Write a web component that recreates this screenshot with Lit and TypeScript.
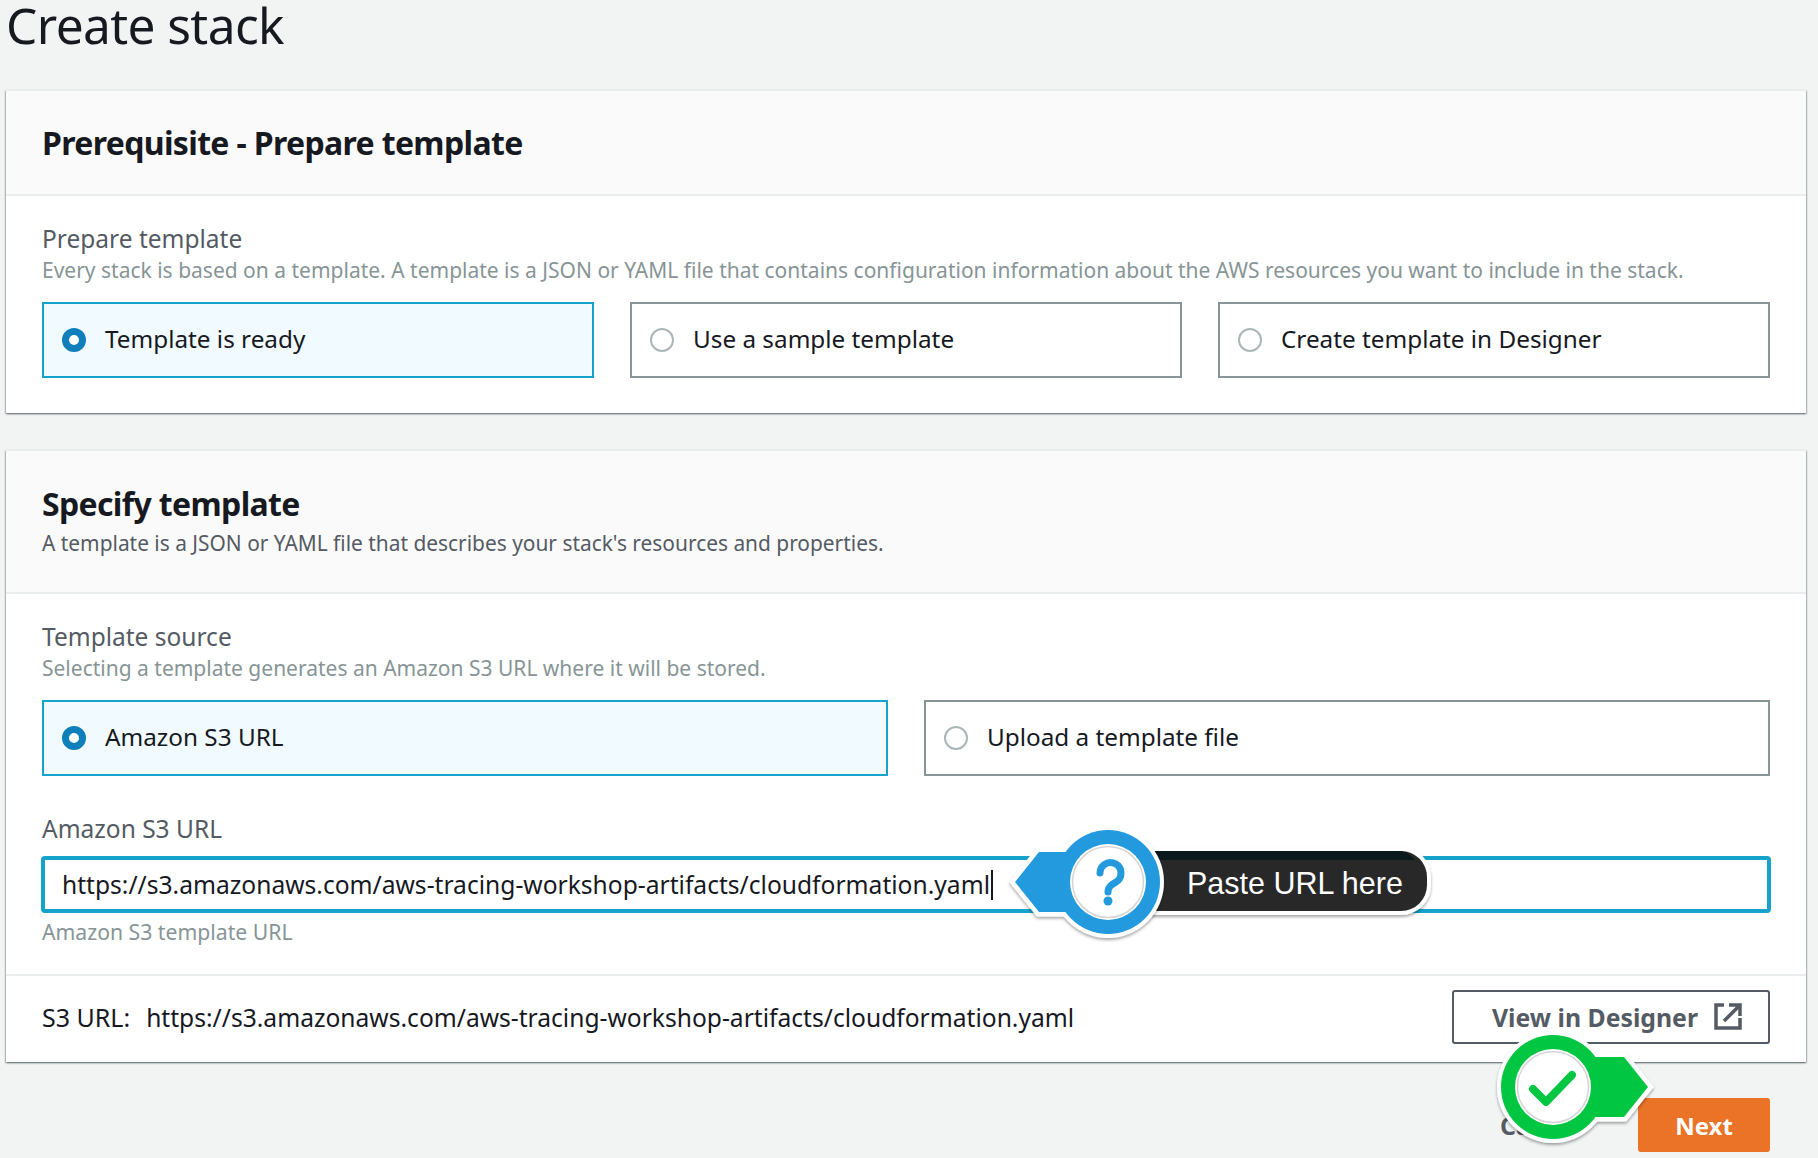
import { LitElement, html, css, svg } from 'lit';
import { customElement } from 'lit/decorators.js';

const S3_URL = 'https://s3.amazonaws.com/aws-tracing-workshop-artifacts/cloudformation.yaml';

@customElement('app-root')
export class AppRoot extends LitElement {
  static styles = css`
    :host {
      display: block;
      position: relative;
      box-sizing: border-box;
      width: 1818px;
      height: 1158px;
      padding: 0 12px 0 6px;
      overflow: hidden;
      background: #f2f3f3;
      color: #16191f;
      font-family: 'Noto Sans', sans-serif;
    }
    h1 {
      margin: 0;
      height: 90px;
      font-size: 49.6px;
      line-height: 50px;
      font-weight: 400;
      letter-spacing: -0.6px;
    }
    .card {
      background: #fff;
      box-shadow: 0 1px 2px 0 rgba(0, 28, 36, 0.45), 1px 1px 1px 0 rgba(0, 28, 36, 0.15),
        -1px 1px 1px 0 rgba(0, 28, 36, 0.15);
      border-top: 1px solid #eaeded;
    }
    .card + .card {
      margin-top: 37px;
    }
    .head {
      box-sizing: border-box;
      display: flex;
      flex-direction: column;
      justify-content: center;
      padding: 0 36px;
      background: #fafafa;
      border-bottom: 2px solid #eaeded;
    }
    .head h2 {
      margin: 0;
      font-size: 32px;
      line-height: 40px;
      font-weight: 700;
      letter-spacing: -0.65px;
    }
    .head p {
      margin: 2px 0 0;
      font-size: 20.9px;
      line-height: 34px;
      color: #545b64;
    }
    .h1 { height: 105px; }
    .h2 { height: 143px; padding-top: 1px; }
    .body {
      padding: 27px 36px 0;
    }
    .first {
      padding-bottom: 35px;
    }
    .label {
      font-size: 24.5px;
      line-height: 32px;
      color: #545b64;
    }
    .desc {
      font-size: 21px;
      line-height: 30px;
      color: #879596;
    }
    .tiles {
      display: grid;
      gap: 36px;
      margin-top: 17px;
    }
    .three { grid-template-columns: repeat(3, 1fr); }
    .two { grid-template-columns: repeat(2, 1fr); }
    .tile {
      box-sizing: border-box;
      display: flex;
      align-items: center;
      gap: 19px;
      height: 76px;
      padding: 0 18px;
      border: 2px solid #879596;
      font-size: 24.3px;
    }
    .tile.on {
      border-color: #16a3cb;
      background: #f1faff;
    }
    .tile-text {
      margin-bottom: 4px;
    }
    .radio {
      box-sizing: border-box;
      width: 24px;
      height: 24px;
      border-radius: 50%;
      border: 2px solid #aab7b8;
      background: #fff;
      flex: none;
    }
    .on .radio {
      border: 7px solid #0f7fbc;
    }
    .url-label {
      margin-top: 37px;
    }
    .input {
      box-sizing: border-box;
      display: flex;
      align-items: center;
      height: 57px;
      margin: 11px -1px 0;
      padding: 0 17px;
      border: 4px solid #16a3cb;
      border-radius: 4px;
      font-size: 24.6px;
      background: #fff;
    }
    .caret {
      width: 2px;
      height: 30px;
      margin-left: 1px;
      background: #16191f;
    }
    .hint {
      margin-top: 4px;
      font-size: 21.2px;
    }
    .foot {
      box-sizing: border-box;
      display: flex;
      align-items: center;
      justify-content: space-between;
      height: 88px;
      margin-top: 27px;
      padding: 0 36px 5px;
      border-top: 2px solid #eaeded;
      font-size: 24.6px;
    }
    .foot span:first-child {
      font-size: 25px;
    }
    .foot span + span {
      margin-left: 16px;
    }
    .btn {
      box-sizing: border-box;
      display: flex;
      align-items: center;
      justify-content: center;
      gap: 16px;
      width: 318px;
      height: 54px;
      padding-left: 12px;
      border: 2px solid #545b64;
      border-radius: 3px;
      color: #545b64;
      font-size: 24.8px;
      font-weight: 700;
    }
    .actions {
      display: flex;
      justify-content: flex-end;
      align-items: center;
      gap: 56px;
      margin-top: 36px;
      padding-right: 36px;
    }
    .cancel {
      color: #545b64;
      font-size: 24.8px;
      font-weight: 700;
    }
    .next {
      display: flex;
      align-items: center;
      justify-content: center;
      width: 132px;
      height: 54px;
      border-radius: 3px;
      background: #ea7328;
      color: #fff;
      font-size: 24px;
      font-weight: 700;
    }
    .overlay {
      position: absolute;
      left: 0;
      top: 0;
      pointer-events: none;
    }
    .tip {
      position: absolute;
      left: 1150px;
      top: 851px;
      box-sizing: border-box;
      width: 277px;
      height: 60px;
      padding-left: 37px;
      color: #fff;
      font: 30.5px/64px 'Liberation Sans', sans-serif;
    }
  `;

  tile(label: string, on = false) {
    return html`<div class="tile ${on ? 'on' : ''}">
      <span class="radio"></span><span class="tile-text">${label}</span>
    </div>`;
  }

  // marker = circle plus arrow head, the outline is drawn first in white
  marker(cx: number, cy: number, dir: number, tip: number, color: string, glyph: unknown) {
    const arrow = `M${cx} ${cy - 30}H${cx + dir * (tip - 24)}L${cx + dir * tip} ${cy}L${cx + dir * (tip - 24)} ${cy + 30}H${cx}Z`;
    return svg`
      <g filter="url(#sh)">
        <path d=${arrow} fill="#fff" stroke="#fff" stroke-width="9" />
        <circle cx=${cx} cy=${cy} r="56" fill="#fff" />
      </g>
      <path d=${arrow} fill=${color} />
      <circle cx=${cx} cy=${cy} r="52" fill=${color} />
      <circle cx=${cx} cy=${cy} r="38" fill="#fff" />
      <circle cx=${cx} cy=${cy} r="35.5" fill="none" stroke="#d5d5d5" stroke-width="1.5" />
      ${glyph}
    `;
  }

  render() {
    return html`
      <h1>Create stack</h1>
      <section class="card">
        <div class="head h1"><h2>Prerequisite - Prepare template</h2></div>
        <div class="body first">
          <div class="label">Prepare template</div>
          <div class="desc">
            Every stack is based on a template. A template is a JSON or YAML file that contains configuration information about the AWS resources you want to include in the stack.
          </div>
          <div class="tiles three">
            ${this.tile('Template is ready', true)} ${this.tile('Use a sample template')}
            ${this.tile('Create template in Designer')}
          </div>
        </div>
      </section>
      <section class="card">
        <div class="head h2">
          <h2>Specify template</h2>
          <p>A template is a JSON or YAML file that describes your stack's resources and properties.</p>
        </div>
        <div class="body">
          <div class="label">Template source</div>
          <div class="desc">Selecting a template generates an Amazon S3 URL where it will be stored.</div>
          <div class="tiles two">
            ${this.tile('Amazon S3 URL', true)} ${this.tile('Upload a template file')}
          </div>
          <div class="label url-label">Amazon S3 URL</div>
          <div class="input">${S3_URL}<span class="caret"></span></div>
          <div class="desc hint">Amazon S3 template URL</div>
        </div>
        <div class="foot">
          <div><span>S3 URL:</span><span>${S3_URL}</span></div>
          <div class="btn">
            View in Designer
            <svg width="28" height="27" viewBox="0 0 28 27" fill="none" stroke="#545b64" stroke-width="3.5">
              <path d="M10 2H2v23h24v-10" />
              <path d="M15 2h11v11M26 2 10 18" />
            </svg>
          </div>
        </div>
      </section>
      <div class="actions">
        <div class="cancel">Cancel</div>
        <div class="next">Next</div>
      </div>

      <svg class="overlay" width="1818" height="1158" viewBox="0 0 1818 1158">
        <defs>
          <filter id="sh" x="-20%" y="-20%" width="140%" height="140%">
            <feDropShadow dx="0" dy="2" stdDeviation="1.5" flood-color="#000" flood-opacity="0.35" />
          </filter>
        </defs>
        <g filter="url(#sh)">
          <rect x="1110" y="847" width="321" height="68" rx="30" fill="#fff" />
        </g>
        <rect x="1110" y="851" width="317" height="60" rx="26" fill="#282828" />
        <path d="M1110 860v-9h291a26 26 0 0 1 14 9Z" fill="#0a1a1c" />
        ${this.marker(
          1108,
          882,
          -1,
          93,
          '#239ade',
          svg`<path d="M1100 873a10.5 10.5 0 1 1 16 9c-5 3-8 5-8 10" fill="none" stroke="#239ade" stroke-width="7" stroke-linecap="round" /><circle cx="1108" cy="901" r="4.5" fill="#239ade" />`,
        )}
        ${this.marker(
          1553,
          1087,
          1,
          95,
          '#00c642',
          svg`<path d="M1533 1089l13 13 26-27" fill="none" stroke="#00c642" stroke-width="8" stroke-linecap="round" stroke-linejoin="round" />`,
        )}
      </svg>
      <div class="tip">Paste URL here</div>
    `;
  }
}
